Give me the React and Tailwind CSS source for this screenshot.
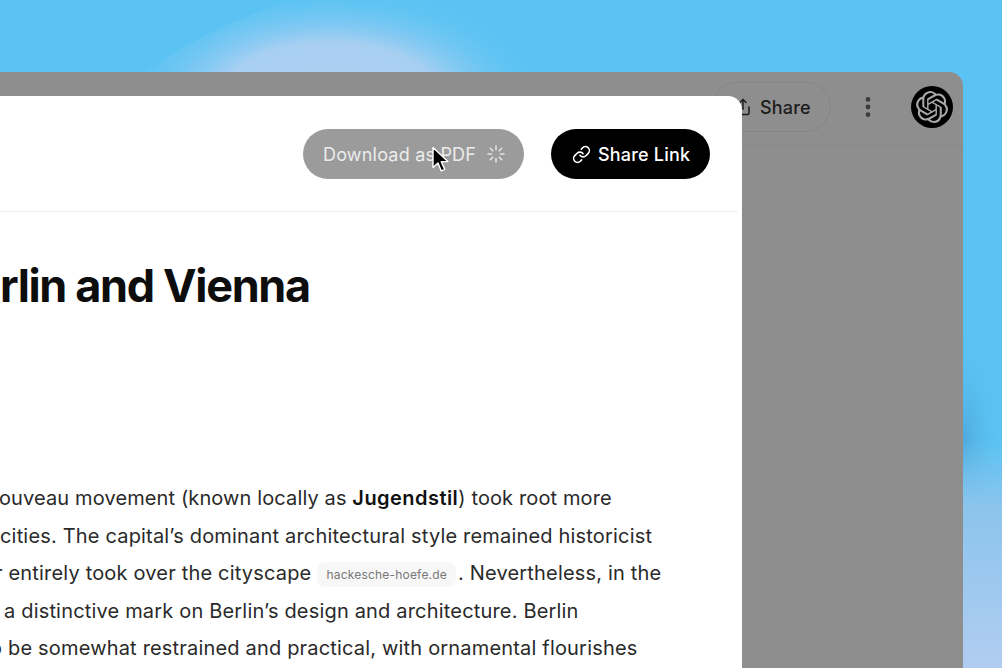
import React from 'react';
import { Link, Share, MoreVertical } from 'lucide-react';
import { SiOpenai } from 'react-icons/si';

const lines = [
  { id: 1, indent: 'ml-[-1px] tracking-[0.12px]', body: <>ouveau movement (known locally as <strong className="font-semibold tracking-[0.45px] text-[#111]">Jugendstil</strong>) took root more</> },
  { id: 2, indent: 'ml-0', body: <>cities. The capital’s dominant architectural style remained historicist</> },
  {
    id: 3,
    indent: 'ml-[-5px]',
    body: (
      <>
        r entirely took over the cityscape
        <span className="mr-[2px] ml-[6px] inline-block h-[25px] rounded-lg bg-[#f7f7f7] px-[9px] align-[1px] text-[12px] leading-[25px] tracking-[0.2px] text-[#777]">hackesche-hoefe.de</span>
        . Nevertheless, in the
      </>
    ),
  },
  { id: 4, indent: 'ml-[4px]', body: <>a distinctive mark on Berlin’s design and architecture. Berlin</> },
  { id: 5, indent: 'ml-[-10px]', body: <>o be somewhat restrained and practical, with ornamental flourishes</> },
];

const Spinner = () => (
  <svg width="20" height="20" viewBox="0 0 20 20" className="text-[#e6e6e6]" stroke="currentColor" strokeWidth="1.6" strokeLinecap="round">
    <path d="M10 2v3.5M10 14.5V18M2 10h3.5M14.5 10H18M4.3 4.3l2.5 2.5M13.2 13.2l2.5 2.5M4.3 15.7l2.5-2.5M13.2 6.8l2.5-2.5" />
  </svg>
);

const Cursor = () => (
  <svg width="18" height="28" viewBox="0 0 18 28" className="absolute top-[50px] left-[431px]">
    <path d="M2 1.5v20l5-4.6 3.3 8 3.4-1.5-3.4-7.8h6.6z" fill="#000" stroke="#fff" strokeWidth="1.4" strokeLinejoin="round" />
  </svg>
);

export default function App() {
  return (
    <div className="relative h-[668px] w-[1002px] overflow-hidden bg-[#5ac3f3] font-['Inter',sans-serif]">
      {/* wallpaper */}
      <svg width="1002" height="668" viewBox="0 0 1002 668" className="absolute inset-0">
        <defs>
          <radialGradient id="swoosh" gradientUnits="userSpaceOnUse" cx="0" cy="0" r="1" gradientTransform="translate(330 100) scale(220 115)">
            <stop offset="0" stopColor="#b0d0f2" />
            <stop offset="0.5" stopColor="#a8cff2" />
            <stop offset="1" stopColor="#5ac3f3" stopOpacity="0" />
          </radialGradient>
          <linearGradient id="corner" x1="0" y1="0" x2="0" y2="1">
            <stop offset="0" stopColor="#8cc4ec" stopOpacity="0" />
            <stop offset="0.3" stopColor="#8cc4ec" />
            <stop offset="1" stopColor="#b1cdf1" />
          </linearGradient>
          <radialGradient id="edge" gradientUnits="userSpaceOnUse" cx="0" cy="0" r="1" gradientTransform="translate(963 440) scale(40 110)">
            <stop offset="0" stopColor="#4a9fd2" stopOpacity="0.7" />
            <stop offset="1" stopColor="#5ac3f3" stopOpacity="0" />
          </radialGradient>
        </defs>
        <path d="M145 72C190 40 250 12 294 0H560V72Z" fill="url(#swoosh)" />
        <rect x="963" y="330" width="39" height="220" fill="url(#edge)" />
        <rect x="963" y="440" width="39" height="228" fill="url(#corner)" />
      </svg>

      <div className="relative flex h-full flex-col pt-[72px] pr-[39px]">
        <div className="relative h-full rounded-tr-[14px] bg-[#8e8e8e]">
          {/* top bar, dimmed behind the dialog */}
          <div className="flex h-[73px] items-start justify-end border-b border-[#8a8a8a] pt-[10px] pr-[10px]">
            <div className="flex h-[50px] w-[119px] items-center gap-[8px] rounded-full border border-[#858585] pl-[21px] text-[18px] font-medium tracking-[0.2px] text-[#1c1c1c]">
              <Share size={18} strokeWidth={2} />
              <span>Share</span>
            </div>
            <MoreVertical size={26} strokeWidth={2.4} className="mt-[12px] ml-[24px] text-[#3a3a3a]" />
            <div className="mt-[4px] ml-[30px] flex h-[42px] w-[42px] items-center justify-center rounded-full bg-black">
              <SiOpenai size={32} className="text-[#a8a8a8]" />
            </div>
          </div>

          {/* dialog */}
          <div className="absolute top-[24px] left-0 h-[572px] w-[742px] overflow-hidden rounded-tr-[14px] bg-white">
            <div className="mr-[4px] flex h-[116px] items-start justify-end gap-[27px] border-b border-[#efefef] pt-[33px] pr-[28px]">
              <button className="flex h-[50px] w-[221px] items-center gap-[10px] rounded-full bg-[#9b9b9b] pl-[20px] text-[18px] font-normal tracking-[0.2px] text-[#ececec]">
                Download as PDF
                <Spinner />
              </button>
              <button className="flex h-[50px] w-[159px] items-center gap-[7px] rounded-full bg-black pl-[21px] text-[18px] font-medium tracking-[0.2px] text-white">
                <Link size={19} strokeWidth={2} />
                Share Link
              </button>
            </div>
            <h1 className="mt-[44px] text-[45px] leading-[60px] font-bold tracking-[-1.35px] whitespace-nowrap text-[#0d0d0d]">rlin and Vienna</h1>
            <div className="mt-[164px] text-[20px] leading-[37.5px] tracking-[0.18px] text-[#2a2a2a]">
              {lines.map((line) => (
                <p key={line.id} className={`whitespace-nowrap ${line.indent}`}>{line.body}</p>
              ))}
            </div>
            <Cursor />
          </div>
        </div>
      </div>
    </div>
  );
}
